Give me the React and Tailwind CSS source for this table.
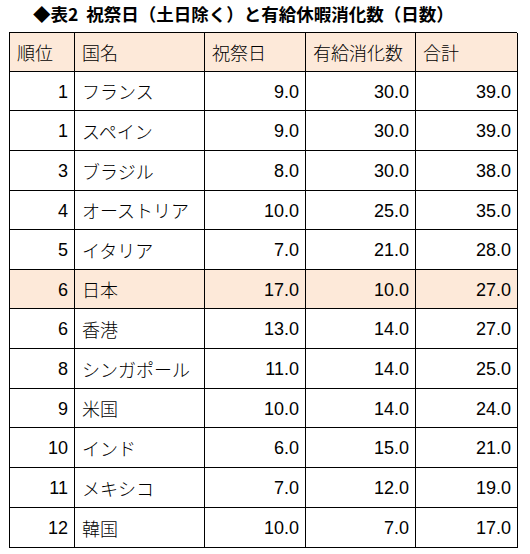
import React from "react";

const rows = [
  ["1", "フランス", "9.0", "30.0", "39.0"],
  ["1", "スペイン", "9.0", "30.0", "39.0"],
  ["3", "ブラジル", "8.0", "30.0", "38.0"],
  ["4", "オーストリア", "10.0", "25.0", "35.0"],
  ["5", "イタリア", "7.0", "21.0", "28.0"],
  ["6", "日本", "17.0", "10.0", "27.0", true],
  ["6", "香港", "13.0", "14.0", "27.0"],
  ["8", "シンガポール", "11.0", "14.0", "25.0"],
  ["9", "米国", "10.0", "14.0", "24.0"],
  ["10", "インド", "6.0", "15.0", "21.0"],
  ["11", "メキシコ", "7.0", "12.0", "19.0"],
  ["12", "韓国", "10.0", "7.0", "17.0"],
];

const tall = [false, true, true, false, true, false, true, true, false, true, true, true];

function NumCell({ children, bg, isTall }) {
  return (
    <div
      className={`${isTall ? "h-[40px]" : "h-[39px]"} ${
        bg ? "bg-[#fde9d9]" : "bg-white"
      } border-r border-b border-black flex items-center justify-end pr-[6px] pt-[1px] text-[18px] leading-none [font-family:'Liberation_Sans',Arial,sans-serif]`}
    >
      {children}
    </div>
  );
}

function TextCell({ children, bg, isTall }) {
  return (
    <div
      className={`${isTall ? "h-[40px]" : "h-[39px]"} ${
        bg ? "bg-[#fde9d9]" : "bg-white"
      } border-r border-b border-black flex items-center pl-[7px] text-[18px] font-light leading-none [font-family:'Noto_Sans_CJK_JP',sans-serif]`}
    >
      {children}
    </div>
  );
}

export default function App() {
  return (
    <div className="w-[530px] h-[554px] bg-white text-black">
      <div className="h-[32px] flex items-center pl-[33px] pb-[4px] text-[17.5px] font-bold leading-none [font-family:'Noto_Sans_CJK_JP',sans-serif]">
        ◆表2&nbsp;&nbsp;祝祭日（土日除く）と有給休暇消化数（日数）
      </div>
      <div className="ml-[9px] w-[508px] border-t border-l border-black grid grid-cols-[65px_130px_101px_110px_102px]">
        {["順位", "国名", "祝祭日", "有給消化数", "合計"].map((h) => (
          <TextCell key={h} bg isTall={false}>
            {h}
          </TextCell>
        ))}
        {rows.map((r, i) => (
          <React.Fragment key={i}>
            <NumCell bg={r[5]} isTall={tall[i]}>
              {r[0]}
            </NumCell>
            <TextCell bg={r[5]} isTall={tall[i]}>
              {r[1]}
            </TextCell>
            <NumCell bg={r[5]} isTall={tall[i]}>
              {r[2]}
            </NumCell>
            <NumCell bg={r[5]} isTall={tall[i]}>
              {r[3]}
            </NumCell>
            <NumCell bg={r[5]} isTall={tall[i]}>
              {r[4]}
            </NumCell>
          </React.Fragment>
        ))}
      </div>
    </div>
  );
}
